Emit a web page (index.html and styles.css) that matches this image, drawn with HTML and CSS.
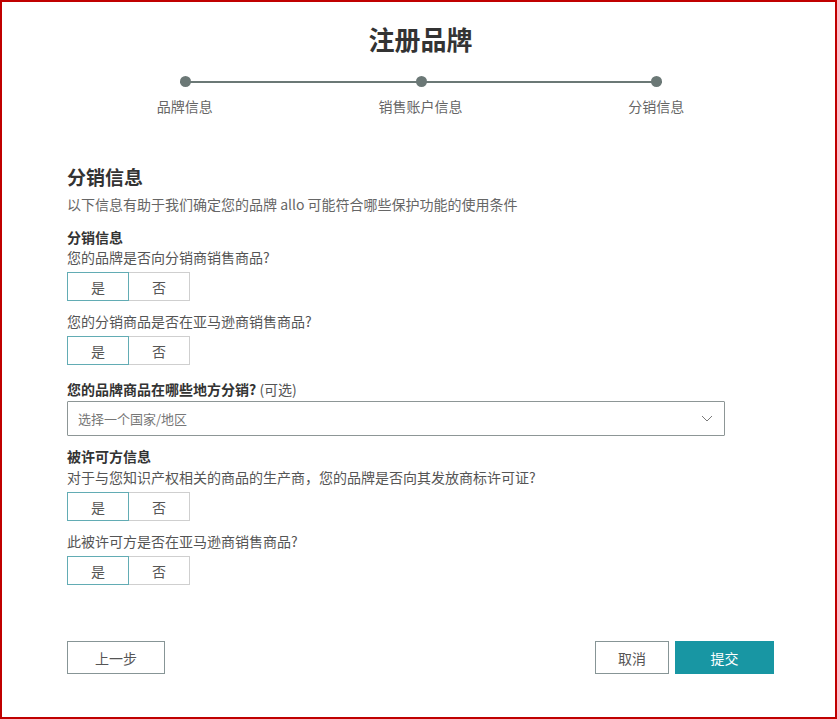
FILE: index.html
```html
<!DOCTYPE html>
<html lang="zh-CN">
<head>
    <meta charset="UTF-8">
    <meta name="viewport" content="width=device-width, initial-scale=1.0">
    <title>注册品牌</title>
    <link rel="stylesheet" href="styles.css">
</head>
<body>
    <div class="page">
        <h1 class="title">注册品牌</h1>

        <div class="stepper">
            <div class="track">
                <span class="dot"></span>
                <span class="dot"></span>
                <span class="dot"></span>
            </div>
            <div class="step-labels">
                <span>品牌信息</span>
                <span>销售账户信息</span>
                <span>分销信息</span>
            </div>
        </div>

        <h2 class="section-title">分销信息</h2>
        <p class="section-desc">以下信息有助于我们确定您的品牌 allo 可能符合哪些保护功能的使用条件</p>

        <div class="group">
            <div class="field-label">分销信息</div>
            <div class="question">您的品牌是否向分销商销售商品?</div>
            <div class="toggle">
                <button class="toggle-btn selected">是</button>
                <button class="toggle-btn">否</button>
            </div>
            <div class="question">您的分销商品是否在亚马逊商销售商品?</div>
            <div class="toggle">
                <button class="toggle-btn selected">是</button>
                <button class="toggle-btn">否</button>
            </div>
        </div>

        <div class="group group-regions">
            <div class="field-label">您的品牌商品在哪些地方分销? <span class="optional">(可选)</span></div>
            <div class="select">
                <span class="placeholder">选择一个国家/地区</span>
                <svg class="chevron" width="12" height="7" viewBox="0 0 12 7">
                    <polyline points="1,1 6,6 11,1" fill="none" stroke="#7a7a7a" stroke-width="1"/>
                </svg>
            </div>
        </div>

        <div class="group group-licensee">
            <div class="field-label spaced">被许可方信息</div>
            <div class="question">对于与您知识产权相关的商品的生产商，您的品牌是否向其发放商标许可证?</div>
            <div class="toggle">
                <button class="toggle-btn selected">是</button>
                <button class="toggle-btn">否</button>
            </div>
            <div class="question">此被许可方是否在亚马逊商销售商品?</div>
            <div class="toggle">
                <button class="toggle-btn selected">是</button>
                <button class="toggle-btn">否</button>
            </div>
        </div>

        <div class="actions">
            <button class="btn btn-back">上一步</button>
            <div class="actions-right">
                <button class="btn btn-cancel">取消</button>
                <button class="btn btn-submit">提交</button>
            </div>
        </div>
    </div>
</body>
</html>
```

FILE: styles.css
```css
* {
    box-sizing: border-box;
    font-family: "Noto Sans CJK SC", "Noto Sans", sans-serif;
}

body {
    margin: 0;
    min-height: 100vh;
    border: 2px solid #c00000;
    background-color: #fff;
    color: #333;
    padding-top: 19px;
}

.page {
    width: 707px;
    margin-left: 65px;
}

.title {
    margin: 0;
    font-size: 26px;
    line-height: 36px;
    font-weight: 700;
    text-align: center;
    color: #333;
}

/* stepper */
.stepper {
    margin-top: 19px;
}

.track {
    display: flex;
    justify-content: space-between;
    align-items: center;
    height: 11px;
    margin: 0 112px 0 113px;
    background: linear-gradient(#6b7876, #6b7876) center / 100% 2px no-repeat;
}

.dot {
    width: 11px;
    height: 11px;
    border-radius: 50%;
    background-color: #6b7876;
}

.step-labels {
    display: grid;
    grid-template-columns: 1fr 1fr 1fr;
    margin-top: 9px;
    font-size: 14px;
    line-height: 20px;
    color: #666;
    text-align: center;
}

/* section */
.section-title {
    margin: 48px 0 0;
    font-size: 19px;
    line-height: 26px;
    font-weight: 700;
    color: #333;
}

.section-desc {
    margin: 4px 0 0;
    font-size: 14px;
    line-height: 20px;
    color: #666;
}

.group {
    margin-top: 14px;
}

.group-regions {
    margin-top: 15px;
}

.group-licensee {
    margin-top: 11px;
}

.field-label {
    font-size: 14px;
    line-height: 19px;
    font-weight: 700;
    color: #333;
    margin-bottom: 1px;
}

.field-label.spaced {
    margin-bottom: 2px;
}

.optional {
    font-weight: 400;
    color: #555;
}

.question {
    font-size: 14px;
    line-height: 19px;
    color: #555;
    margin-bottom: 5px;
}

.toggle {
    display: flex;
    margin-bottom: 11px;
}

.toggle-btn {
    width: 62px;
    height: 29px;
    padding: 0;
    border: 1px solid #cfcfcf;
    background-color: #fff;
    font-size: 14px;
    color: #555;
    cursor: pointer;
}

.toggle-btn + .toggle-btn {
    width: 61px;
    border-left: none;
}

.toggle-btn.selected {
    border-color: #62acb4;
}

/* select */
.select {
    display: flex;
    justify-content: space-between;
    align-items: center;
    width: 658px;
    height: 35px;
    margin-top: 2px;
    margin-bottom: 11px;
    padding: 0 11px 0 10px;
    border: 1px solid #8d9696;
    border-radius: 1px;
}

.placeholder {
    font-size: 13px;
    color: #777;
}

/* buttons */
.actions {
    display: flex;
    justify-content: space-between;
    margin-top: 56px;
}

.actions-right {
    display: flex;
    gap: 6px;
}

.btn {
    height: 33px;
    padding: 0;
    font-size: 14px;
    cursor: pointer;
}

.btn-back {
    width: 98px;
    border: 1px solid #879596;
    background-color: #fff;
    color: #555;
}

.btn-cancel {
    width: 74px;
    border: 1px solid #879596;
    background-color: #fff;
    color: #555;
}

.btn-submit {
    width: 99px;
    border: none;
    background-color: #1896a3;
    color: #fff;
}
```
